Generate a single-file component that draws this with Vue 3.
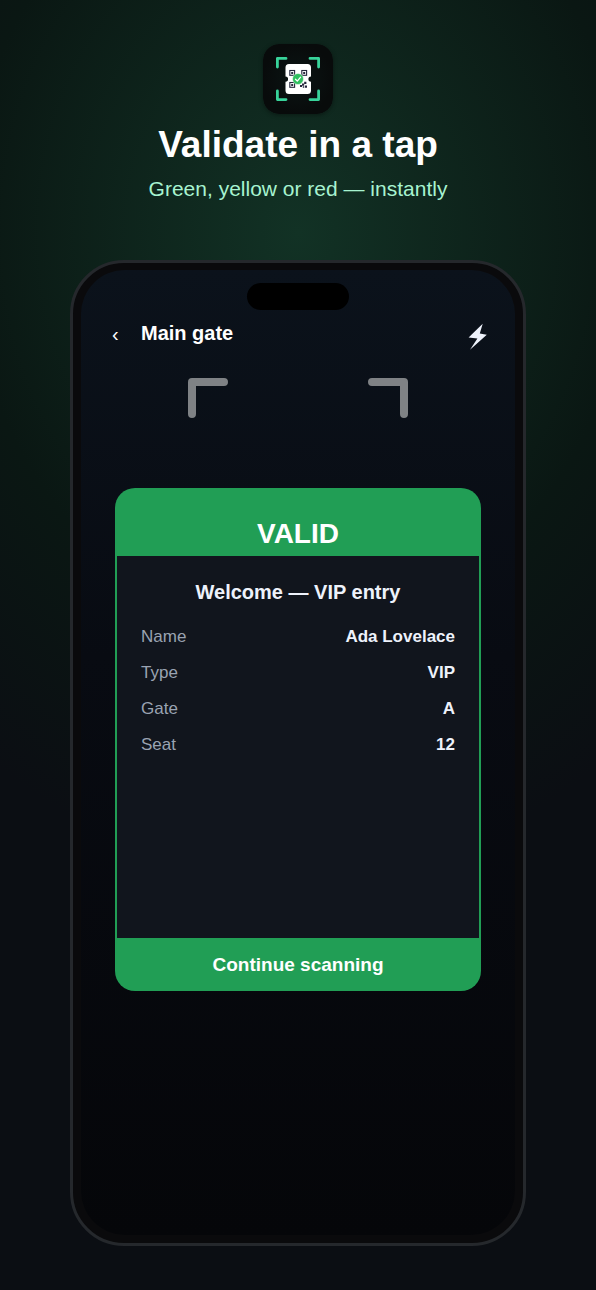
<script setup>
import { ref } from 'vue'

const gate = ref('Main gate')
const torchOn = ref(false)

const rows = [
  { label: 'Name', value: 'Ada Lovelace' },
  { label: 'Type', value: 'VIP' },
  { label: 'Gate', value: 'A' },
  { label: 'Seat', value: '12' }
]

const toggleTorch = () => {
  torchOn.value = !torchOn.value
}
</script>

<template>
  <main class="promo">
    <header class="intro">
      <svg class="logo" viewBox="0 0 70 70" aria-hidden="true">
        <defs>
          <radialGradient id="tile">
            <stop offset="0" stop-color="#0b1514" />
            <stop offset="1" stop-color="#080b0b" />
          </radialGradient>
        </defs>
        <rect width="70" height="70" rx="16" fill="url(#tile)" />
        <g fill="none" stroke="#38d39a" stroke-width="2.8" stroke-linecap="round" stroke-linejoin="round">
          <path d="M23 14.4H14.4V23" />
          <path d="M47 14.4H55.6V23" />
          <path d="M23 55.6H14.4V47" />
          <path d="M47 55.6H55.6V47" />
        </g>
        <path
          fill="#fff"
          d="M26 20H44.5a3.5 3.5 0 0 1 3.5 3.5V32.5a2.6 2.6 0 0 0 0 5.2V46.5a3.5 3.5 0 0 1-3.5 3.5H26a3.5 3.5 0 0 1-3.5-3.5V37.7a2.6 2.6 0 0 0 0-5.2V23.5A3.5 3.5 0 0 1 26 20z"
        />
        <g fill="none" stroke="#25273c" stroke-width="1.1">
          <rect x="26.8" y="26.5" width="4.8" height="4.8" />
          <rect x="38.8" y="26.5" width="4.8" height="4.8" />
          <rect x="26.8" y="38.5" width="4.8" height="4.8" />
        </g>
        <path
          fill="#25273c"
          d="M28.2 27.9h2v2h-2zM40.2 27.9h2v2h-2zM28.2 39.9h2v2h-2zM41.2 37.8h2.2v2.2h-2.2zM39 39.5h2.2v2.2H39zM37 41h2v2h-2zM42 41.5h2v2.300h-2zM39.8 42.3h1.5v1.5h-1.5z"
        />
        <circle cx="35" cy="35" r="5.5" fill="#2fbf5f" stroke="#fff" stroke-width="0.5" />
        <path d="M32.5 35.2l1.8 1.9 3.3-3.9" fill="none" stroke="#fff" stroke-width="1.3" stroke-linecap="round" stroke-linejoin="round" />
      </svg>
      <h1 class="title">Validate in a tap</h1>
      <p class="subtitle">Green, yellow or red — instantly</p>
    </header>

    <section class="phone">
      <div class="screen">
        <div class="island"></div>

        <div class="topbar">
          <button class="icon-btn back" type="button" aria-label="Back">‹</button>
          <h2 class="gate">{{ gate }}</h2>
          <button class="icon-btn torch" type="button" aria-label="Torch" :aria-pressed="torchOn" @click="toggleTorch">
            <svg width="22" height="28" viewBox="0 0 22 28">
              <path d="M15.7 0.8L1.6 14.5L10.4 15.6L3 26.8L19.8 11.7L12.8 10.6z" fill="currentColor" />
            </svg>
          </button>
        </div>

        <svg class="viewfinder" width="220" height="40" viewBox="0 0 220 40" aria-hidden="true">
          <path d="M4 36V4H36M184 4H216V36" />
        </svg>

        <article class="result">
          <h3 class="status">VALID</h3>
          <div class="details">
            <p class="welcome">Welcome — VIP entry</p>
            <dl class="fields">
              <div v-for="row in rows" :key="row.label" class="field">
                <dt>{{ row.label }}</dt>
                <dd>{{ row.value }}</dd>
              </div>
            </dl>
          </div>
          <button class="continue" type="button">Continue scanning</button>
        </article>
      </div>
    </section>
  </main>
</template>

<style>
body {
  margin: 0;
  background: #0b0e13;
}
</style>

<style scoped>
.promo {
  box-sizing: border-box;
  min-height: 100vh;
  padding: 44px 70px;
  display: flex;
  flex-direction: column;
  background: radial-gradient(ellipse 90% 50% at 50% 18%, #123225 0%, #0a1713 62%, #0b0e13 100%);
  font-family: "Liberation Sans", Arial, sans-serif;
  color: #fff;
}

h1, h2, h3, p, dl, dd {
  margin: 0;
}

.intro {
  display: flex;
  flex-direction: column;
  align-items: center;
  text-align: center;
  margin-bottom: 56px;
}

.logo {
  width: 70px;
  height: 70px;
  border-radius: 16px;
  box-shadow: 0 1px 4px rgba(0, 0, 0, 0.4);
}

.title {
  margin-top: 9px;
  font-size: 37px;
  line-height: 44px;
  font-weight: 700;
}

.subtitle {
  margin-top: 8px;
  margin-bottom: 1px;
  font-size: 21px;
  line-height: 28px;
  color: #a7f3d0;
}

.phone {
  flex: 1;
  display: flex;
  padding: 7px 8px 8px;
  border: 3px solid #25282c;
  border-radius: 54px;
  background: #0a0a0c;
}

.screen {
  flex: 1;
  min-width: 0;
  display: flex;
  flex-direction: column;
  align-items: center;
  padding: 13px 26px 40px;
  border-radius: 44px;
  background: linear-gradient(180deg, #0b121b 0%, #080b12 40%, #050609 100%);
}

.island {
  width: 102px;
  height: 27px;
  border-radius: 14px;
  background: #000;
}

.topbar {
  align-self: stretch;
  display: flex;
  align-items: flex-start;
  height: 30px;
  margin-top: 11px;
}

.icon-btn {
  padding: 0;
  border: none;
  background: none;
  color: #fff;
  font: inherit;
  cursor: pointer;
}

.icon-btn.back {
  width: 34px;
  padding-left: 5px;
  font-size: 20px;
  line-height: 26px;
  text-align: left;
}

.gate {
  font-size: 20px;
  line-height: 24px;
  font-weight: 700;
}

.icon-btn.torch {
  display: flex;
  align-self: flex-end;
  margin-left: auto;
  color: #eef2fb;
}

.viewfinder {
  margin-top: 27px;
  fill: none;
  stroke: #7f8285;
  stroke-width: 8;
  stroke-linecap: round;
  stroke-linejoin: round;
}

.result {
  box-sizing: border-box;
  align-self: stretch;
  min-height: 503px;
  margin: 70px 8px 0;
  padding: 2px;
  display: flex;
  flex-direction: column;
  border-radius: 20px;
  background: #219e55;
}

.status {
  padding: 28px 0 6px;
  font-size: 28px;
  line-height: 32px;
  font-weight: 700;
  text-align: center;
}

.details {
  flex: 1;
  padding: 24px;
  background: #11151d;
  color: #eef2fb;
}

.welcome {
  font-size: 20px;
  line-height: 24px;
  font-weight: 700;
  text-align: center;
}

.fields {
  margin-top: 15px;
}

.field {
  display: flex;
  justify-content: space-between;
  font-size: 17px;
  line-height: 36px;
}

.field dt {
  color: #9aa3b2;
}

.field dd {
  font-weight: 700;
}

.continue {
  padding: 14px 0 12px;
  border: none;
  border-radius: 0 0 18px 18px;
  background: none;
  color: #fff;
  font-family: inherit;
  font-size: 19px;
  line-height: 25px;
  font-weight: 700;
  cursor: pointer;
}
</style>
